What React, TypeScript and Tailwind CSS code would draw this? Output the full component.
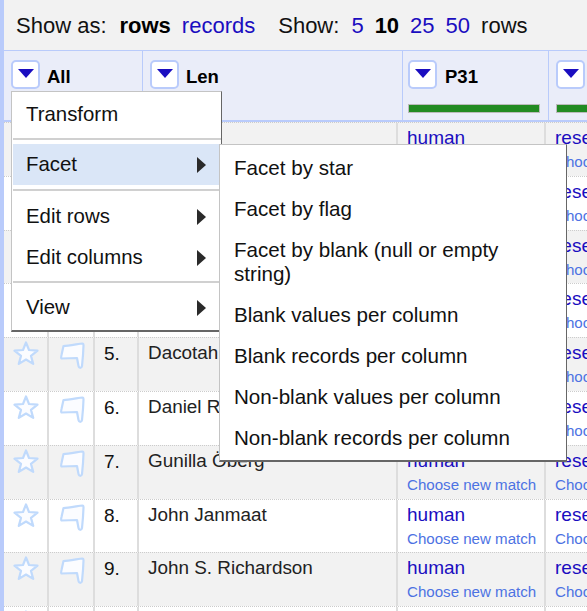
const rows = [
  { n: "1.", name: "" },
  { n: "2.", name: "" },
  { n: "3.", name: "" },
  { n: "4.", name: "" },
  { n: "5.", name: "Dacotah" },
  { n: "6.", name: "Daniel R" },
  { n: "7.", name: "Gunilla Öberg" },
  { n: "8.", name: "John Janmaat" },
  { n: "9.", name: "John S. Richardson" },
  { n: "10.", name: "" },
];

function Star() {
  return (
    <svg width="26" height="26" viewBox="0 0 26 26" fill="none">
      <path d="M13 2.500l3 7.500 8.500.6-6.500 5.300 2.200 8-7.200-4.400-7.200 4.400 2.200-8L1.500 10.600l8.500-.6z" fill="#fbfcff" stroke="#c0dafc" strokeWidth="2.200" strokeLinejoin="round" />
    </svg>
  );
}

function Flag() {
  return (
    <svg width="28" height="30" viewBox="0 0 28 30" fill="none">
      <path d="M5.500 6C10 6 20 4 24.500 3.500c1 0 1 1 1 2l-.5 9.500-1 11c-.5 2.500-3 2.500-3.500 0L19 18l-15.500.5C3 18 3 17 3.500 15z" fill="#fbfcff" stroke="#c0dafc" strokeWidth="2.200" strokeLinejoin="round" />
    </svg>
  );
}

function DropButton() {
  return (
    <div className="w-[29px] h-[29px] shrink-0 bg-white border-2 border-[#b9cbfb] rounded-[5px] flex items-center justify-center pb-[3px]">
      <svg width="16" height="9" viewBox="0 0 16 9"><path d="M0 0h16L8 9z" fill="#1a0dc0" /></svg>
    </div>
  );
}

function Arrow() {
  return (
    <svg width="9" height="16" viewBox="0 0 9 16" className="shrink-0"><path d="M0 0l9 8-9 8z" fill="#2a2a2a" /></svg>
  );
}

function MainItem({ label, arrow, active }: { label: string; arrow?: boolean; active?: boolean }) {
  return (
    <div className={`h-[41px] pl-[13px] pr-[15px] flex items-center justify-between ${active ? "bg-[#dae6f7]" : ""}`}>
      <span>{label}</span>
      {arrow ? <Arrow /> : null}
    </div>
  );
}

const facets = [
  "Facet by star",
  "Facet by flag",
  "Facet by blank (null or empty string)",
  "Blank values per column",
  "Blank records per column",
  "Non-blank values per column",
  "Non-blank records per column",
];

export default function App() {
  return (
    <div className="relative w-[587px] h-[611px] overflow-hidden flex bg-white text-[#222] font-['Liberation_Sans',Arial,sans-serif]">
      <div className="w-1 shrink-0 bg-[#b9cbfb]" />
      <div className="flex-1 min-w-0 flex flex-col">
        <div className="h-[50px] shrink-0 bg-[#f2f2f2] flex items-center pl-3 pt-[1px] text-[22px] whitespace-nowrap text-[#111]">
          <span>Show as:</span>
          <b className="ml-[13px] text-black">rows</b>
          <span className="ml-[11px] text-[#1a0dc0]">records</span>
          <span className="ml-[23px]">Show:</span>
          <span className="ml-[12px] text-[#1a0dc0]">5</span>
          <b className="ml-[11px] text-black">10</b>
          <span className="ml-[11px] text-[#1a0dc0]">25</span>
          <span className="ml-[11px] text-[#1a0dc0]">50</span>
          <span className="ml-[11px]">rows</span>
        </div>

        <div className="h-[72px] shrink-0 bg-[#eaedf9] border-t border-b-2 border-[#b9cbfb] grid grid-cols-[139px_260px_146px_1fr]">
          <div className="border-r border-[#b9cbfb] pl-[7px] pt-[9px] flex gap-[7px] items-start">
            <DropButton />
            <b className="text-[18.500px] text-black leading-[34px]">All</b>
          </div>
          <div className="border-r border-[#b9cbfb] pl-[7px] pt-[9px] flex gap-[7px] items-start">
            <DropButton />
            <b className="text-[18.500px] text-black leading-[34px]">Len</b>
          </div>
          <div className="border-r border-[#b9cbfb] pl-[5px] pt-[9px]">
            <div className="flex gap-[8px] items-start">
              <DropButton />
              <b className="text-[18.500px] text-black leading-[34px]">P31</b>
            </div>
            <div className="mt-[10px] w-[132px] h-[9px] bg-[#228b22] border border-[#bbb]" />
          </div>
          <div className="pl-[7px] pt-[9px]">
            <DropButton />
            <div className="mt-[15px] h-[9px] bg-[#228b22] border border-[#bbb] border-r-0" />
          </div>
        </div>

        <div className="flex-1 min-h-0">
          {rows.map((r, i) => (
            <div
              key={r.n}
              className={`h-[53.800px] grid grid-cols-[45px_46px_44px_259px_148px_1fr] border-t border-dotted border-[#ccc] ${i % 2 === 0 ? "bg-[#f2f2f2]" : "bg-white"}`}
            >
              <div className="border-r-2 border-[#ddd] pl-[9px] pt-[2px]"><Star /></div>
              <div className="border-r-2 border-[#ddd] pl-[9px] pt-[2px]"><Flag /></div>
              <div className="border-r-2 border-[#ddd] pl-[9px] pt-[2px] text-[19px] text-[#111]">{r.n}</div>
              <div className="border-r-2 border-[#ddd] pl-[9px] pt-[1px] text-[18.900px] text-[#222] whitespace-nowrap overflow-hidden">{r.name}</div>
              <div className="border-r-2 border-[#ddd] pl-[9px] pt-[2px] whitespace-nowrap overflow-hidden">
                <div className="text-[19px] text-[#1a0dc0] leading-[26px]">human</div>
                <div className="text-[15.100px] text-[#4d72e3] leading-[22px]">Choose new match</div>
              </div>
              <div className="pl-[9px] pt-[2px] whitespace-nowrap overflow-hidden">
                <div className="text-[19px] text-[#1a0dc0] leading-[26px]">researcher</div>
                <div className="text-[15.100px] text-[#4d72e3] leading-[22px]">Choose new match</div>
              </div>
            </div>
          ))}
        </div>
      </div>

      <div className="absolute left-[11px] top-[91px] w-[211px] h-[241px] bg-white border border-[#c4c4c4] border-r-[#666] border-b-2 border-b-[#666] pl-[1px] text-[20.400px] text-[#111] z-10">
        <div className="h-[45px] pl-[13px] flex items-center">Transform</div>
        <div className="h-[2px] bg-[#d0d0d0] mt-[1px] mb-[4px]" />
        <MainItem label="Facet" arrow active />
        <div className="h-[2px] bg-[#d0d0d0] mt-[4px] mb-[5px]" />
        <MainItem label="Edit rows" arrow />
        <MainItem label="Edit columns" arrow />
        <div className="h-[2px] bg-[#d0d0d0] mt-[3px] mb-[4px]" />
        <MainItem label="View" arrow />
      </div>

      <div className="absolute left-[219px] top-[144px] w-[348px] h-[318px] bg-white border border-[#c4c4c4] border-r-[#666] border-b-2 border-b-[#666] text-[20.600px] leading-[24px] text-[#111] pl-[14px] pr-3 pt-[2px] z-20">
        {facets.map((f) => (
          <div key={f} className="py-[8.500px]">{f}</div>
        ))}
      </div>
    </div>
  );
}
